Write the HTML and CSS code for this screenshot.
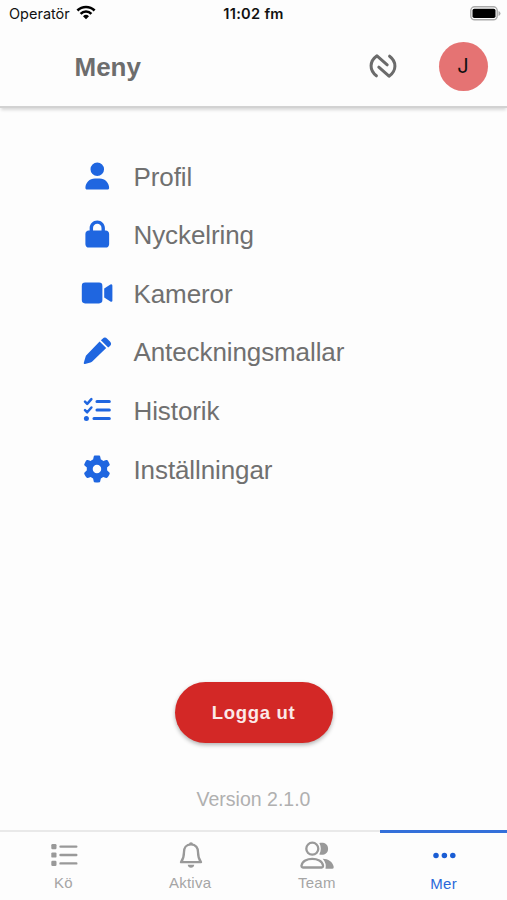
FILE: index.html
```html
<!DOCTYPE html>
<html lang="sv">
<head>
<meta charset="utf-8">
<title>Meny</title>
<link rel="stylesheet" href="styles.css">
</head>
<body>
<div class="screen">
  <div class="status">
    <div class="carrier"><span>Operatör</span>
      <svg width="20" height="15" viewBox="0 0 20 15" fill="none" stroke="#000" stroke-width="2.6"><path d="M1.4 5.5a12.2 12.2 0 0 1 17.2 0M4.600 8.800a7.600 7.600 0 0 1 10.800 0"/><path d="M10 14.200l-3-3a4.300 4.300 0 0 1 6 0z" fill="#000" stroke="none"/></svg>
    </div>
    <div class="clock">11:02 fm</div>
    <svg class="battery" width="31" height="15" viewBox="0 0 31 15"><rect x=".8" y=".8" width="26.400" height="13" rx="3.800" fill="#fff" stroke="#aaa" stroke-width="1.400"/><rect x="2.500" y="2.700" width="23" height="9.300" rx="1.800"/><path d="M28.500 5v5q2-.8 2-2.500t-2-2.500z" fill="#aaa"/></svg>
  </div>
  <header class="header">
    <h1>Meny</h1>
    <svg class="nfc" width="30" height="28" viewBox="0 0 30 28" fill="none" stroke="#6b6b6b" stroke-width="3" stroke-linecap="round" stroke-linejoin="round"><path d="M8.400 23.800C1.200 18.400 1.200 9.300 9 3.800L19.200 12.800M21.600 4.200c7.200 5.400 7.200 14.500-.6 20L10.800 15.200"/></svg>
    <div class="avatar">J</div>
  </header>
  <main class="content">
    <nav class="menu">
      <a class="row"><svg viewBox="0 0 32 32"><g transform="translate(4.400 2.400) scale(.053)"><path d="M224 256A128 128 0 1 0 224 0a128 128 0 1 0 0 256zm-45.700 48C79.800 304 0 383.800 0 482.300C0 498.700 13.300 512 29.700 512H418.300c16.400 0 29.700-13.300 29.700-29.700C448 383.800 368.200 304 269.700 304H178.300z"/></g></svg><span>Profil</span></a>
      <a class="row"><svg viewBox="0 0 32 32"><g transform="translate(4.400 2.400) scale(.053)"><path d="M144 144v48H304V144c0-44.200-35.800-80-80-80s-80 35.800-80 80zM80 192V144C80 64.500 144.500 0 224 0s144 64.500 144 144v48h16c35.300 0 64 28.700 64 64V448c0 35.300-28.700 64-64 64H64c-35.300 0-64-28.700-64-64V256c0-35.300 28.700-64 64-64H80z"/></g></svg><span>Nyckelring</span></a>
      <a class="row"><svg viewBox="0 0 32 32"><rect x=".8" y="5.600" width="20.600" height="20.800" rx="3.300"/><path d="M23.200 11.500l6.200-4.100q2-.9 2 1.300v14.600q0 2.200-2 1.300l-6.200-4.100z"/></svg><span>Kameror</span></a>
      <a class="row"><svg viewBox="0 0 32 32"><path d="M18.600 6.500l6.600 6.600L11.500 26.300q-.8.8-2 1.100l-5.500 1.600q-1.500.3-1.200-1.200l1.700-5.900q.3-1 1.100-1.800zM19.900 5.300l1.700-1.600q2.300-2.200 4.600 0l2.800 2.800q2.200 2.300 0 4.600l-1.800 1.500z"/></svg><span>Anteckningsmallar</span></a>
      <a class="row"><svg viewBox="0 0 32 32" class="line"><path d="M16 7.500h12.300M16 16h12.300M13 24.500h15.300" stroke-width="3.100"/><path d="M4 7.700l2.200 2.200 4.200-4.800M4 16.100l2.200 2.200 4.200-4.800" stroke-width="2.500"/><circle cx="5.400" cy="24.500" r="2.500"/></svg><span>Historik</span></a>
      <a class="row"><svg viewBox="0 0 32 32"><g transform="translate(2.400 2.400) scale(.053)"><path d="M495.900 166.600c3.200 8.700 .5 18.400-6.400 24.600l-43.300 39.400c1.100 8.300 1.700 16.800 1.700 25.400s-.6 17.100-1.700 25.400l43.300 39.400c6.900 6.200 9.600 15.900 6.400 24.600c-4.400 11.900-9.700 23.300-15.800 34.300l-4.700 8.100c-6.600 11-14 21.400-22.100 31.200c-5.900 7.200-15.700 9.600-24.500 6.800l-55.700-17.700c-13.400 10.300-28.200 18.900-44 25.400l-12.500 57.100c-2 9.100-9 16.300-18.200 17.800c-13.800 2.300-28 3.500-42.500 3.500s-28.700-1.200-42.500-3.500c-9.200-1.500-16.200-8.700-18.200-17.800l-12.500-57.100c-15.800-6.500-30.600-15.100-44-25.400L83.100 425.900c-8.800 2.800-18.600 .3-24.500-6.800c-8.100-9.800-15.500-20.200-22.100-31.200l-4.700-8.100c-6.100-11-11.400-22.400-15.800-34.300c-3.200-8.700-.5-18.400 6.400-24.600l43.300-39.400C64.600 273.100 64 264.600 64 256s.6-17.100 1.700-25.400L22.400 191.200c-6.900-6.200-9.600-15.900-6.400-24.600c4.400-11.900 9.700-23.300 15.800-34.300l4.700-8.100c6.600-11 14-21.400 22.100-31.200c5.900-7.200 15.700-9.600 24.500-6.800l55.700 17.700c13.400-10.300 28.200-18.900 44-25.400l12.500-57.100c2-9.100 9-16.300 18.200-17.800C227.300 1.200 241.500 0 256 0s28.700 1.200 42.500 3.500c9.200 1.500 16.200 8.700 18.200 17.800l12.500 57.100c15.800 6.500 30.600 15.100 44 25.400l55.700-17.700c8.800-2.800 18.600-.3 24.500 6.800c8.100 9.800 15.500 20.200 22.100 31.200l4.700 8.100c6.100 11 11.400 22.400 15.800 34.300zM256 336a80 80 0 1 0 0-160 80 80 0 1 0 0 160z"/></g></svg><span>Inställningar</span></a>
    </nav>
    <div class="bottom">
      <button class="logout">Logga ut</button>
      <div class="version">Version 2.1.0</div>
    </div>
  </main>
  <footer class="tabs">
    <a class="tab"><svg width="36" height="30" viewBox="0 0 36 30"><g fill="#999"><rect x="6.300" y="3" width="5.200" height="5.200" rx="1.200"/><rect x="6.300" y="11.400" width="5.200" height="5.200" rx="1.200"/><rect x="6.300" y="19.800" width="5.200" height="5.200" rx="1.200"/></g><path d="M15.500 5.600h15.800M15.500 14h15.800M15.500 22.400h15.800" stroke="#999" stroke-width="2.400" stroke-linecap="round"/></svg><span>Kö</span></a>
    <a class="tab"><svg width="36" height="30" viewBox="0 0 36 30"><path d="M19 3.300c-5 0-7 3.800-7 7.600 0 5-.8 7.200-3 10.300h20c-2.200-3.100-3-5.300-3-10.300 0-3.800-2-7.600-7-7.600z" fill="none" stroke="#999" stroke-width="2.300" stroke-linejoin="round"/><path d="M15.700 23.800h6.600q-.5 3-3.300 3t-3.300-3zM17 3.300a2 2 0 0 1 4 0z" fill="#999"/></svg><span>Aktiva</span></a>
    <a class="tab"><svg width="36" height="30" viewBox="0 0 36 30"><g fill="none" stroke="#999" stroke-width="2.300"><circle cx="13.300" cy="7.700" r="6"/><path d="M4 26.500q-1.800 0-1.400-2.200c1.300-8.500 20-8.500 21.400 0Q24.300 26.500 22.600 26.500z"/></g><path d="M20.300 2c4-1.200 8.800.5 8.800 5.700s-4.800 7-8.800 5.700c2-3.700 2-7.700 0-11.400zM23.700 17.700c5.600 0 10.100 3 11 8q.3 2-1.300 2H26.500q1.200-5.500-2.800-10z" fill="#999"/></svg><span>Team</span></a>
    <a class="tab active"><svg width="36" height="30" viewBox="0 0 36 30" fill="#1a5dd4"><circle cx="10" cy="13.600" r="2.750"/><circle cx="18.400" cy="13.600" r="2.750"/><circle cx="26.800" cy="13.600" r="2.750"/></svg><span>Mer</span></a>
  </footer>
</div>
</body>
</html>
```
FILE: styles.css
```css
* { box-sizing: border-box; }
body { margin: 0; background: #fdfdfd; font-family: "Liberation Sans", Arial, sans-serif; color: #707070; }
.screen { width: 507px; height: 900px; display: flex; flex-direction: column; overflow: hidden; }
.status { height: 28px; display: grid; grid-template-columns: 1fr auto 1fr; align-items: center; padding: 0 6px 0 9px; color: #111; font-family: Inter, sans-serif; font-size: 14.5px; }
.carrier { display: flex; align-items: center; gap: 6px; }
.carrier span { margin-top: -2px; }
.carrier svg { margin-top: -3px; }
.clock { font-weight: 600; font-size: 14.6px; letter-spacing: .3px; margin-right: 3px; }
.battery { justify-self: end; margin-top: -2px; }
.header { height: 80px; display: flex; align-items: center; padding: 0 19.5px 1px 74.5px; border-bottom: 2px solid #d2d2d2; box-shadow: 0 3px 3px -1px rgba(0,0,0,.15); }
h1 { margin: 0; font-size: 26px; line-height: 30px; font-weight: 700; color: #6d6d6d; }
.nfc { margin-left: auto; margin-top: -2px; }
.avatar { width: 49px; height: 49px; margin-left: 40.5px; border-radius: 50%; background: #e57373; color: #111; font: 20px/49px Inter, sans-serif; text-align: center; }
.content { flex: 1; display: flex; flex-direction: column; justify-content: space-between; padding: 38.3px 0 19.5px; }
.row { height: 58.6px; display: flex; align-items: center; padding-left: 81px; font-size: 26px; letter-spacing: -.1px; }
.row svg { width: 32px; height: 32px; margin-right: 20.5px; fill: #1f66e0; }
.row .line { stroke: #1f66e0; stroke-linecap: round; stroke-linejoin: round; }
.row .line path { fill: none; }
.row .line circle { stroke: none; }
.row span { padding-top: 3px; }
.bottom { display: flex; flex-direction: column; align-items: center; gap: 44px; }
.logout { width: 158px; height: 61px; border: 0; border-radius: 31px; background: #d32826; color: #fbe9e8; font: 700 18.5px "Liberation Sans", sans-serif; letter-spacing: .7px; box-shadow: 0 2px 4px rgba(0,0,0,.3); padding: 2px 0 0; }
.version { font-size: 19.5px; line-height: 24px; color: #b0b0b0; }
.tabs { height: 70px; display: grid; grid-template-columns: repeat(4, 1fr); }
.tab { display: flex; flex-direction: column; align-items: center; border-top: 2px solid #e9e9e9; padding-top: 9px; font-size: 15px; line-height: 20px; color: #a5a5a5; letter-spacing: .25px; }
.tab span { margin-top: 2px; }
.tab.active { color: #2a68da; border-top: 3px solid #3470da; }
```
